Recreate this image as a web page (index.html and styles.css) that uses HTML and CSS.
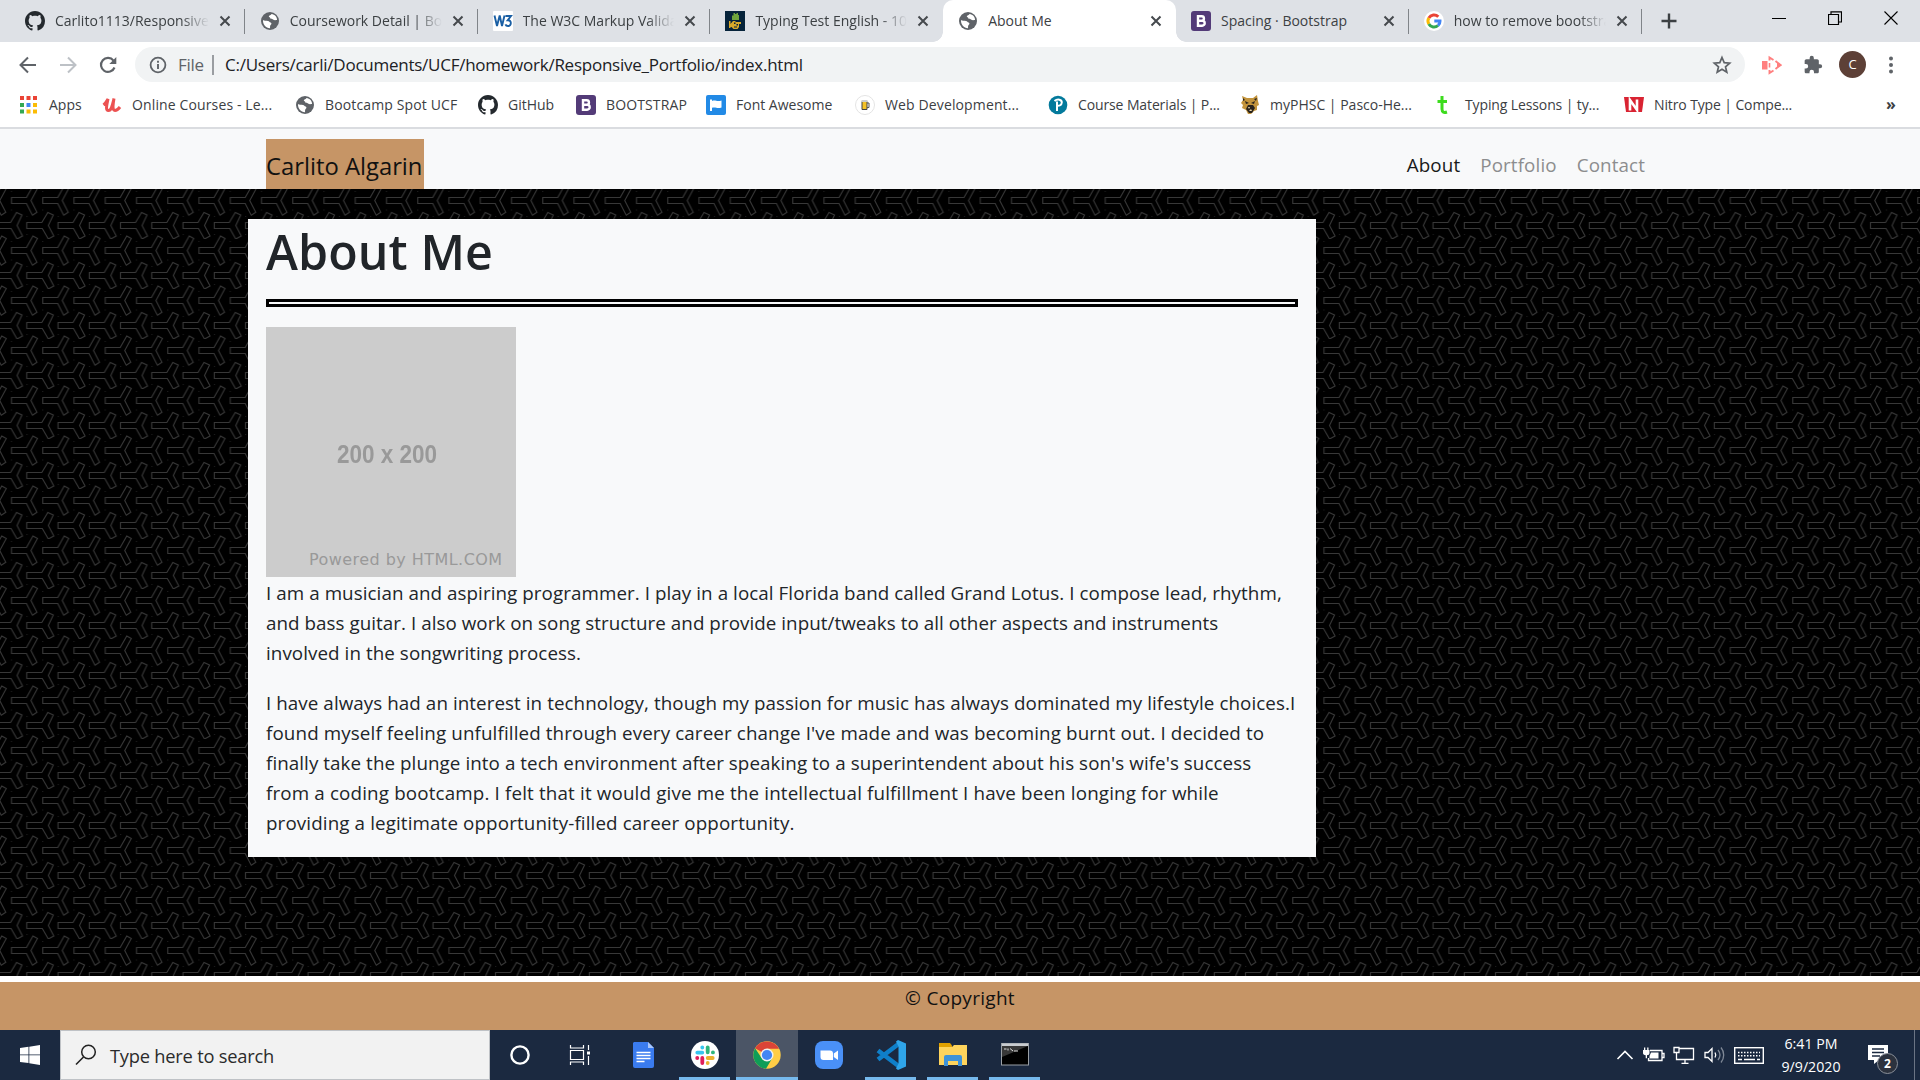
FILE: index.html
```html
<!DOCTYPE html>
<html lang="en">
<head>
<meta charset="utf-8">
<title>About Me</title>
<link rel="stylesheet" href="styles.css">
</head>
<body>
<svg class="defs" aria-hidden="true">
  <symbol id="github" viewBox="0 0 16 16"><path fill="#24292e" d="M8 0C3.58 0 0 3.58 0 8c0 3.54 2.29 6.53 5.47 7.59.4.07.55-.17.55-.38 0-.19-.01-.82-.01-1.49-2.01.37-2.53-.49-2.69-.94-.09-.23-.48-.94-.82-1.13-.28-.15-.68-.52-.01-.53.63-.01 1.08.58 1.23.82.72 1.21 1.87.87 2.33.66.07-.52.28-.87.51-1.07-1.78-.2-3.64-.89-3.64-3.95 0-.87.31-1.59.82-2.15-.08-.2-.36-1.02.08-2.12 0 0 .67-.21 2.2.82.64-.18 1.32-.27 2-.27s1.36.09 2 .27c1.53-1.04 2.2-.82 2.2-.82.44 1.1.16 1.92.08 2.12.51.56.82 1.27.82 2.15 0 3.07-1.87 3.75-3.65 3.95.29.25.54.73.54 1.48 0 1.07-.01 1.93-.01 2.2 0 .21.15.46.55.38A8.01 8.01 0 0 0 16 8c0-4.42-3.58-8-8-8z"/></symbol>
  <symbol id="globe" viewBox="0 0 20 20"><circle cx="10" cy="10" r="9" fill="#5f6368"/><path fill="#fff" d="M3 9c1 .9 3.400.8 5 .9 1.300.2 1.500 1.300 2.600 1.500 1.200.3 1 1.800.2 2.400-1 .8-.6 2-.8 3.400C6 17.300 2.700 13.500 3 9zM11.500 2.900c-.3 1.300-2.600 1.100-2.700 2.400-.1 1 1.400.9 1.500 2 .2 1.300 1.900.4 2.700 1.200 1.100 1 2.400.7 4 .6.300-3.200-2.200-5.700-5.500-6.200z"/></symbol>
  <symbol id="boot" viewBox="0 0 20 20"><rect width="20" height="20" rx="3" fill="#533b78"/><path fill="none" stroke="#fff" stroke-width="2.400" d="M7 5.200h3.700a2.200 2.200 0 0 1 0 4.500H7zM7 9.700h4.200a2.500 2.500 0 0 1 0 5H7z"/></symbol>
  <symbol id="close" viewBox="0 0 12 12"><path d="M1.500 1.500l9 9M10.500 1.500l-9 9" stroke="#45494d" stroke-width="2" fill="none"/></symbol>
</svg>

<header class="browser">
  <div class="tabstrip">
    <div class="tab first"><svg class="fav"><use href="#github"/></svg><span class="tab-title fade">Carlito1113/Responsive_Portfolio</span><svg class="x"><use href="#close"/></svg></div>
    <div class="tab"><svg class="fav"><use href="#globe"/></svg><span class="tab-title fade">Coursework Detail | Bootcamp</span><svg class="x"><use href="#close"/></svg></div>
    <div class="tab"><svg class="fav" viewBox="0 0 20 20"><rect width="20" height="20" rx="1" fill="#fff"/><path d="M1.500 4.500L4 15 6.700 4.500 9 15 11.500 4.500M12.500 5H18l-3.200 4.200c4-.3 4 5.800.2 5.800-1.400 0-2.200-.7-2.600-1.700" stroke="#1a5fa4" stroke-width="1.900" fill="none"/></svg><span class="tab-title fade">The W3C Markup Validation</span><svg class="x"><use href="#close"/></svg></div>
    <div class="tab last"><svg class="fav" viewBox="0 0 20 20"><rect width="20" height="20" fill="#06233a"/><path fill="#6fa53c" d="M7 9V4.500h1.500V2H10v1h1.500V2H13v2h1v5z"/><path fill="#d9a92a" d="M4 10h1.500v3L8 10h2l1 1h5v2h-2v3l-1.500 2h-4L6.500 16H5.500v1H4z"/><path fill="#06233a" d="M9 11.500h1.500v1.500H9zM11.500 13h1.500v1.500h-1.500zM9 15.500h3v1H9z"/></svg><span class="tab-title fade">Typing Test English - 10fast</span><svg class="x"><use href="#close"/></svg></div>
    <div class="tab active"><svg class="fav"><use href="#globe"/></svg><span class="tab-title">About Me</span><svg class="x"><use href="#close"/></svg></div>
    <div class="tab"><svg class="fav"><use href="#boot"/></svg><span class="tab-title">Spacing · Bootstrap</span><svg class="x"><use href="#close"/></svg></div>
    <div class="tab"><svg class="fav" viewBox="0 0 20 20"><circle cx="10" cy="10" r="10" fill="#fff"/><g fill="none" stroke-width="3"><path stroke="#ea4335" d="M4.800 7A6 6 0 0 1 14.300 5.800"/><path stroke="#fbbc05" d="M4.800 13a6 6 0 0 1 0-6"/><path stroke="#34a853" d="M14 14.500A6 6 0 0 1 4.800 13"/><path stroke="#4285f4" d="M10.300 10H16c.1 2-.6 3.400-2 4.500"/></g></svg><span class="tab-title fade">how to remove bootstrap</span><svg class="x"><use href="#close"/></svg></div>
    <svg class="newtab" viewBox="0 0 16 16"><path d="M8 .5v15M.5 8h15" stroke="#3c4043" stroke-width="2.400"/></svg>
    <div class="winctl">
      <svg viewBox="0 0 14 14"><path d="M0 7.500h14" stroke="#000"/></svg>
      <svg viewBox="0 0 14 14"><path d="M.5 3.500h10v10H.5zM3 3.500V.8h10.500v10.200H11" stroke="#000" fill="none" stroke-width="1.200"/></svg>
      <svg viewBox="0 0 14 14"><path d="M.5.5l13 13M13.500.5l-13 13" stroke="#000" stroke-width="1.100"/></svg>
    </div>
  </div>

  <div class="toolbar">
    <div class="navbtns">
      <svg viewBox="0 0 18 18"><path d="M17 9H2M9 1.500L1.500 9 9 16.500" stroke="#5f6368" stroke-width="2" fill="none"/></svg>
      <svg viewBox="0 0 18 18"><path d="M1 9h15M9 1.500L16.500 9 9 16.500" stroke="#bdc1c6" stroke-width="2" fill="none"/></svg>
      <svg viewBox="0 0 18 18"><path d="M15.500 11.500A7 7 0 1 1 14.500 4.600" stroke="#5f6368" stroke-width="2.200" fill="none"/><path d="M17.300 1v7h-7z" fill="#5f6368"/></svg>
    </div>
    <div class="omnibox">
      <svg class="info" viewBox="0 0 18 18"><circle cx="9" cy="9" r="7.400" stroke="#5f6368" stroke-width="1.800" fill="none"/><path d="M9 8v5M9 4.800v1.900" stroke="#5f6368" stroke-width="1.900"/></svg>
      <span class="scheme">File</span>
      <span class="url">C:/Users/carli/Documents/UCF/homework/Responsive_Portfolio/index.html</span>
      <svg class="star" viewBox="0 0 20 20"><path d="M10 2.500l2.200 5.100 5.500.5-4.200 3.700 1.300 5.400L10 14.300l-4.800 2.900 1.300-5.400L2.300 8.100l5.500-.5z" stroke="#5f6368" stroke-width="1.700" fill="none"/></svg>
    </div>
    <div class="actions">
      <svg viewBox="0 0 20 20"><path d="M0 6h5.500v8.500H0z" fill="#ff7f7f"/><path d="M7.500 5.500v-3l4 2.500M13.500 6l5 4-5 4M11.500 15.500l-4 2.500v-3" stroke="#ff7f7f" stroke-width="1.900" fill="none"/><path d="M7.500 8v4.500" stroke="#ff7f7f" stroke-width="1.600"/><path d="M15 7l5 3.200-5 2.800z" fill="#ff7f7f"/></svg>
      <svg viewBox="0 0 24 24"><path fill="#5f6368" d="M20.500 11H19V7c0-1.100-.9-2-2-2h-4V3.500a2.500 2.500 0 0 0-5 0V5H4c-1.100 0-2 .9-2 2v3.800h1.500a2.700 2.700 0 0 1 0 5.400H2V20c0 1.100.9 2 2 2h3.800v-1.500a2.700 2.700 0 0 1 5.400 0V22H17c1.100 0 2-.9 2-2v-4h1.500a2.500 2.500 0 0 0 0-5z"/></svg>
      <span class="avatar">C</span>
      <svg class="dots" viewBox="0 0 20 20"><g fill="#5f6368"><circle cx="10" cy="3.500" r="2"/><circle cx="10" cy="10" r="2"/><circle cx="10" cy="16.500" r="2"/></g></svg>
    </div>
  </div>

  <nav class="bookmarks">
    <a><svg viewBox="0 0 20 20"><path fill="#ea4335" d="M1 1h4v4H1zM7.500 1h4v4h-4zM14 1h4v4h-4z"/><path fill="#34a853" d="M1 8h4v4H1zM1 14.500h4v4H1z"/><path fill="#4285f4" d="M7.500 8h4v4h-4z"/><path fill="#fbbc05" d="M14 8h4v4h-4zM7.500 14.500h4v4h-4zM14 14.500h4v4h-4z"/></svg><span>Apps</span></a>
    <a class="wide"><svg viewBox="0 0 20 20"><path d="M1.500 10C4 8 5 5.500 6 4 5 9 3 15.500 6.500 15.500c3 0 4-6 5.500-12C11 9 10 15.500 13 15.500c2 0 3.500-1.500 5-3.500" stroke="#ec5252" stroke-width="3" fill="none"/></svg><span>Online Courses - Le...</span></a>
    <a class="wide"><svg><use href="#globe"/></svg><span>Bootcamp Spot UCF</span></a>
    <a><svg><use href="#github"/></svg><span>GitHub</span></a>
    <a class="wide"><svg><use href="#boot"/></svg><span>BOOTSTRAP</span></a>
    <a><svg viewBox="0 0 20 20"><rect width="20" height="20" rx="2" fill="#228ae6"/><path fill="#fff" d="M4 4.500h2V6c3-1.500 5 1 9.500-.5v7c-4.500 1.500-6-1-9.500.3V16H4z"/></svg><span>Font Awesome</span></a>
    <a class="wide"><svg viewBox="0 0 20 20"><circle cx="10" cy="10" r="9.500" fill="#fff" stroke="#e4e4e4"/><path d="M7 6.500h5v8H7z" fill="#f5c226" stroke="#444"/><path d="M6.500 5h6v2h-6z" fill="#ccc"/><path d="M12 8h2v4.500h-2" stroke="#555" fill="none"/></svg><span>Web Development...</span></a>
    <a class="tight"><svg viewBox="0 0 20 20"><circle cx="10" cy="10" r="9.300" fill="#047a9c"/><path d="M9 16V6.500M6.500 6c3-2.500 7.500-1.500 7.300 1.500-.2 2.500-2.300 3.400-4.800 3.200" stroke="#fff" stroke-width="2" fill="none"/></svg><span>Course Materials | P...</span></a>
    <a><svg viewBox="0 0 20 20"><path fill="#c3943c" d="M2 1l5 2h6l4-3 1 6 1 4-2 1v4l-3 1-3 3H8l-2-4-4-2 1-3-2-2 2-3z"/><path fill="#29231c" d="M5 6l4 2-3 1zM15 6l-4 2 3 1zM8 10h5l2 3-3 5H9l-3-4zM3 3l2 2-2 1zM17 3l-1 3-2-2z"/><path fill="#e9d6ac" d="M8 12l1 2 1-2M12 16l-1-2-2 2z"/></svg><span>myPHSC | Pasco-He...</span></a>
    <a class="tight"><svg viewBox="0 0 20 20"><path d="M7 1v13c0 3.500 2 4 5 3M2.500 6.500h9.500" stroke="#3ddc1e" stroke-width="3" fill="none"/></svg><span>Typing Lessons | ty...</span></a>
    <a class="tight"><svg viewBox="0 0 20 20"><path fill="#d92332" d="M0 2h20l-2 15H2z"/><path d="M6 15.500V5l7 10V4.500" stroke="#fff" stroke-width="2.600" fill="none"/></svg><span>Nitro Type | Compe...</span></a>
    <b class="more">»</b>
  </nav>
</header>

<main class="page">
  <nav class="navbar">
    <a class="brand">Carlito Algarin</a>
    <div class="links"><a class="on">About</a><a>Portfolio</a><a>Contact</a></div>
  </nav>
  <section class="stage">
    <article class="card">
      <h1>About Me</h1>
      <div class="rule"></div>
      <div class="placeholder"><span class="dims">200 x 200</span><span class="powered">Powered by HTML.COM</span></div>
      <p>I am a musician and aspiring programmer. I play in a local Florida band called Grand Lotus. I compose lead, rhythm,<br>
      <span class="snug">and bass guitar. I also work on song structure and provide input/tweaks to all other aspects and instruments</span><br>
      involved in the songwriting process.</p>
      <p>I have always had an interest in technology, though my passion for music has always dominated my lifestyle choices.I<br>
      <span class="loose">found myself feeling unfulfilled through every career change I've made and was becoming burnt out. I decided to</span><br>
      finally take the plunge into a tech environment after speaking to a superintendent about his son's wife's success<br>
      <span class="looser">from a coding bootcamp. I felt that it would give me the intellectual fulfillment I have been longing for while</span><br>
      <span class="loose">providing a legitimate opportunity-filled career opportunity.</span></p>
    </article>
  </section>
  <footer class="footer">© Copyright</footer>
</main>

<div class="taskbar">
  <div class="start"><svg viewBox="0 0 20 20"><path fill="#fff" d="M0 3l8.500-1.200v7.700H0zM9.300 1.700L20 0v9.500H9.300zM0 10.300h8.500V18L0 16.900zM9.300 10.300H20V20L9.300 18.200z"/></svg></div>
  <div class="search"><svg viewBox="0 0 22 22"><circle cx="13.500" cy="8" r="6.800" stroke="#222" stroke-width="1.500" fill="none"/><path d="M8.500 13L1 20.500" stroke="#222" stroke-width="1.600"/></svg><span>Type here to search</span></div>
  <div class="task cortana"><svg viewBox="0 0 22 22"><circle cx="11" cy="11" r="8.600" stroke="#fff" stroke-width="2.400" fill="none"/></svg></div>
  <div class="task view"><svg viewBox="0 0 22 22"><path d="M1.500 6.500h13v9h-13zM1.500 1v3h13V1M1.500 21v-3h13v3M19.500 1v5M19.500 12v9" stroke="#fff" stroke-width="1.200" fill="none"/><path d="M18 7.500h3v3h-3z" fill="#fff"/></svg></div>
  <div class="task"><svg class="big" viewBox="0 0 28 28"><path fill="#3a7bef" d="M5 1h14l6 6v18a2 2 0 0 1-2 2H6a2 2 0 0 1-2-2V2z"/><path fill="#a9c6fa" d="M19 1l6 6h-6z"/><path d="M7.500 11.500h14M7.500 14.500h14M7.500 17.500h14M7.500 20.500h8" stroke="#fff" stroke-width="1.400"/></svg></div>
  <div class="task open"><svg class="big" viewBox="0 0 28 28"><circle cx="14" cy="14" r="14" fill="#fff"/><g fill="none" stroke-width="3.800" stroke-linecap="round"><path stroke="#36c5f0" d="M6.300 11.600h5M11.300 6.300v.3"/><path stroke="#2eb67d" d="M16.700 6.300v5M21.900 11.400h.1"/><path stroke="#ecb22e" d="M16.700 17h5M16.700 22v.1"/><path stroke="#e01e5a" d="M11.300 17v5M6.200 17h.1"/></g></svg></div>
  <div class="task open current"><svg class="big" viewBox="0 0 28 28"><circle cx="14" cy="14" r="13.700" fill="#ffcd46"/><path fill="#db4437" d="M14 14L2.100 7.200A13.700 13.700 0 0 1 26 7.800H14z"/><path fill="#0f9d58" d="M2.100 7.200A13.700 13.700 0 0 0 13 27.700L19.200 17.300 14 14 8.600 17z"/><circle cx="14" cy="14" r="6.500" fill="#f1f1f1"/><circle cx="14" cy="14" r="5.100" fill="#4285f4"/></svg></div>
  <div class="task"><svg class="big" viewBox="0 0 28 28"><rect width="28" height="28" rx="8" fill="#4a90f7"/><path fill="#fff" d="M5.500 9.500h9.500a3 3 0 0 1 3 3v6.500H8.500a3 3 0 0 1-3-3zM18.800 12.500L23 9.500v9.500l-4.200-3z"/></svg></div>
  <div class="task open"><svg class="vs" viewBox="0 0 30 30"><path d="M2 10.500L22.500 26M2 19.500L22.500 4" stroke="#0f7fc9" stroke-width="4.600" fill="none"/><path fill="#2fa5ea" d="M22 0l8 3.500v23L22 30l-2-1.500 2.500-5V6.500L20 1.500z"/></svg></div>
  <div class="task open"><svg class="big" viewBox="0 0 28 28"><path fill="#e1a100" d="M0 2h11l2 2.500V8H0z"/><path fill="#ffd45c" d="M0 6h13l2-2h13v20H0z"/><path fill="#3f93d8" d="M5 25V16a2 2 0 0 1 2-2h14a2 2 0 0 1 2 2v9h-4v-5H9v5z"/></svg></div>
  <div class="task open"><svg class="big" viewBox="0 0 28 28"><rect x=".5" y="2.500" width="27" height="21.500" fill="#000" stroke="#9aa0a6"/><path fill="#c9ccd0" d="M1 2.500h26V5H1z"/><path fill="#383838" d="M1 5h26L1 16z"/><path d="M3 8h2.500M7 7.500v2M9 7.500l3 2.500M13 10h4" stroke="#ddd"/></svg></div>
  <div class="tray">
    <svg class="chev" viewBox="0 0 18 20"><path d="M1.500 14L9 6.500l7.500 7.500" stroke="#fff" stroke-width="1.600" fill="none"/></svg>
    <svg viewBox="0 0 22 20"><path d="M7 5.500h12v10H5.500V13M19.500 8.500h1.500v4h-1.500" stroke="#fff" stroke-width="1.300" fill="none"/><path fill="#fff" d="M8 7.500h7.500v6H6.500V11zM0 5h6.500v3c0 1.500-1 2.200-2.500 2.200v3H2.700v-3C1 10 0 9.500 0 8zM1 2.500h1.300V5H1zM4.200 2.500h1.300V5H4.200z"/></svg>
    <svg viewBox="0 0 22 20"><path d="M6 3.500h14.500v11H3.500V9M12 14.500V18M8.500 18.300h7M1 2.500h5v5H1zM3.500 7v4" stroke="#fff" stroke-width="1.300" fill="none"/></svg>
    <svg viewBox="0 0 22 20"><path d="M1 7.500h3l4-4v13l-4-4H1z" stroke="#fff" stroke-width="1.300" fill="none"/><path d="M11 7.500c1 1.600 1 3.400 0 5" stroke="#fff" stroke-width="1.300" fill="none"/><path d="M14 5c2.400 3 2.400 7 0 10M17 2.500c3.600 4.500 3.600 10.500 0 15" stroke="#7f8896" stroke-width="1.300" fill="none"/></svg>
    <svg class="kbd" viewBox="0 0 30 20"><rect x=".7" y="2.700" width="28.600" height="15.600" stroke="#fff" stroke-width="1.400" fill="none"/><path d="M4 7.500h22M4 10.800h22" stroke="#fff" stroke-width="1.500" stroke-dasharray="1.500 1.500"/><path d="M4 14.500h4M10 14.500h11M23 14.500h3" stroke="#fff" stroke-width="1.400"/></svg>
    <div class="clock">6:41 PM<br>9/9/2020</div>
    <div class="notif"><svg viewBox="0 0 20 22"><path fill="#fff" d="M0 1h20v15h-9l-5 4v-4H0z"/><path d="M4 5h12M4 8.500h12M4 12h8" stroke="#1b2940" stroke-width="1.300"/></svg><b>2</b></div>
    <i class="peek"></i>
  </div>
</div>
</body>
</html>
```
FILE: styles.css
```css
* { box-sizing: border-box; }
body { margin: 0; width: 1920px; height: 1080px; overflow: hidden; display: flex; flex-direction: column; font-family: "Open Sans", "Noto Sans", sans-serif; background: #fff; color: #212529; }
svg { display: block; flex: none; }
.defs { width: 0; height: 0; position: absolute; }

.browser { height: 129px; background: #fff; border-bottom: 2px solid #dadce0; color: #3c4043; font-size: 14px; }
.tabstrip { height: 42px; background: #dee1e6; display: flex; padding-left: 12px; }
.tab { width: 232.800px; height: 42px; display: flex; align-items: center; padding: 0 14px 0 15px; position: relative; }
.tab.first { padding-left: 13px; }
.tab:not(.active):not(.last)::after { content: ""; position: absolute; right: 0; top: 9px; width: 1px; height: 25px; background: #808489; }
.tab.active { background: #fff; border-radius: 10px 10px 0 0; }
.tab.active::before, .tab.active::after { content: ""; position: absolute; bottom: 0; width: 10px; height: 10px; }
.tab.active::before { left: -10px; background: radial-gradient(circle at 0 0, transparent 9.500px, #fff 10px); }
.tab.active::after { right: -10px; background: radial-gradient(circle at 100% 0, transparent 9.500px, #fff 10px); }
.fav { width: 20px; height: 20px; }
.tab-title { flex: 1; margin-left: 10px; margin-right: 10px; padding-bottom: 2px; overflow: hidden; white-space: nowrap; }
.fade { -webkit-mask-image: linear-gradient(90deg, #000 82%, transparent); mask-image: linear-gradient(90deg, #000 82%, transparent); }
.x { width: 12px; height: 12px; }
.newtab { width: 16px; height: 16px; margin: 13px 0 0 19px; }
.winctl { display: flex; gap: 42px; margin: 11px 22px 0 auto; }
.winctl svg { width: 14px; height: 14px; }

.toolbar { height: 45px; display: flex; align-items: center; }
.navbtns { width: 135px; display: flex; gap: 22px; padding-left: 19px; }
.navbtns svg { width: 18px; height: 18px; }
.omnibox { width: 1610px; height: 35px; border-radius: 18px; background: #f1f3f4; display: flex; align-items: center; padding: 0 13px 0 14px; font-size: 17px; letter-spacing: -.25px; }
.info { width: 18px; height: 18px; }
.scheme { margin-left: 11px; color: #5f6368; border-right: 2px solid #9a9da1; height: 20px; line-height: 19px; width: 36px; }
.url { margin-left: 11px; color: #202124; white-space: nowrap; }
.star { width: 20px; height: 20px; margin-left: auto; }
.actions { display: flex; align-items: center; flex: 1; padding-left: 17px; }
.actions svg { width: 20px; height: 20px; }
.actions svg + svg { margin-left: 21px; }
.avatar { width: 27px; height: 27px; border-radius: 50%; background: #5d4037; color: #fff; font-size: 13px; line-height: 27px; text-align: center; margin-left: 16px; }
.actions .dots { margin-left: 15px; }

.bookmarks { height: 36px; display: grid; grid-template-columns: 83px 193px 183px 98px 130px 149px 193px 192px 195px 189px 262px 30px; padding: 0 0 1px 19px; align-items: center; white-space: nowrap; }
.bookmarks a { display: flex; align-items: center; gap: 10px; }
.bookmarks a span { padding-bottom: 1px; }
.bookmarks svg { width: 20px; height: 20px; }
.wide { letter-spacing: .13px; }
.tight { letter-spacing: -.12px; }
.more { font-size: 16px; line-height: 20px; padding-bottom: 2px; }

.page { height: 901px; display: flex; flex-direction: column; }
.navbar { height: 60px; background: #f8f9fa; padding: 10px 275px 0 266px; display: flex; justify-content: space-between; }
.brand { background: #c69566; width: 158px; height: 50px; font-size: 23.800px; line-height: 54px; color: #111; white-space: nowrap; }
.links { display: flex; gap: 20px; font-size: 18.800px; letter-spacing: .12px; line-height: 52px; color: #8c8d8e; }
.links .on { color: #191919; }
.stage { height: 787px; padding: 30px 0 0 248px; background: #000 url("data:image/svg+xml,%3Csvg xmlns='http://www.w3.org/2000/svg' width='125' height='50'%3E%3Cdefs%3E%3Cpattern id='t' width='31.25' height='50' patternUnits='userSpaceOnUse'%3E%3Cg fill='none' stroke='%23383838' stroke-width='1.1'%3E%3Cpath d='M11.500 8.500h15l6.500-11.500 4.500 2.500-6.500 12 6 11.800-4.500 3-6-11.800h-15z'/%3E%3Cpath d='M11.500 58.500h15l6.500-11.500 4.500 2.500-6.500 12h-20z'/%3E%3Cpath d='M-19.750 8.500h15l6.500-11.500 4.500 2.500-6.500 12 6 11.800-4.500 3-6-11.800h-15z'/%3E%3Cpath d='M-19.750 58.500h15l6.500-11.500 4.500 2.500-6.500 12h-20z'/%3E%3Cpath d='M26.800 33.500h15l6-10 5.500 2.500-5 10.500 5.500 10.500-5.500 3-6-10.500h-15.500z'/%3E%3Cpath d='M-4.450 33.500h15l6-10 5.500 2.500-5 10.500 5.500 10.500-5.500 3-6-10.500h-15.500z'/%3E%3C/g%3E%3Cpath fill='%23222' d='M11 2h1v1h-1zM11 20.500h1v1h-1zM26.500 27h1v1h-1zM26.500 45h1v1h-1z'/%3E%3C/pattern%3E%3C/defs%3E%3Crect width='125' height='50' fill='url(%23t)'/%3E%3C/svg%3E"); }
.card { width: 1068px; height: 638px; background: #f8f9fa; padding: 0 18px; }
h1 { margin: 0; height: 80px; font-size: 48.300px; letter-spacing: .1px; line-height: 64px; font-weight: 600; white-space: nowrap; }
.rule { height: 8px; border: 3px solid #000; background: #f8f9fa; }
.placeholder { width: 250px; height: 250px; margin: 20px 0 1px; background: #ccc; display: flex; flex-direction: column; color: #999; white-space: nowrap; }
.dims { font: bold 25px/30px "Liberation Sans", sans-serif; margin: 112px 0 0 71px; transform: scaleX(.9); transform-origin: 0 0; }
.powered { font: 16px/20px "DejaVu Sans", sans-serif; letter-spacing: .45px; margin: 81px 0 0 43px; }
p { margin: 0 0 20px; font-size: 18.800px; letter-spacing: .07px; line-height: 30px; white-space: nowrap; }
.snug { letter-spacing: .05px; }
.loose { letter-spacing: .12px; }
.looser { letter-spacing: .155px; }
.footer { height: 54px; border-top: 6px solid #fff; background: #c69566; text-align: center; font-size: 19px; letter-spacing: .3px; line-height: 32px; color: #111; }

.taskbar { height: 50px; background: #1b2940; display: flex; color: #fff; }
.start { width: 60px; padding: 15px 0 0 20px; }
.start svg { width: 20px; height: 20px; }
.search { width: 430px; background: #f2f2f2; border: 1px solid #bfc2c6; display: flex; align-items: center; padding-left: 14px; gap: 13px; color: #2b2b2b; font-size: 18.300px; letter-spacing: -.22px; }
.search svg { width: 22px; height: 22px; }
.task { width: 62px; display: grid; place-items: center; position: relative; }
.task.cortana { width: 60px; }
.task.view { padding-right: 2px; }
.task svg { width: 22px; height: 22px; }
.task .big { width: 28px; height: 28px; }
.task .vs { width: 30px; height: 30px; }
.open::after { content: ""; position: absolute; left: 5px; right: 6px; bottom: 0; height: 3px; background: #76b9ed; }
.current { background: #4b5566; }
.current::after { left: 0; right: 0; }
.tray { margin-left: auto; width: 304px; display: flex; align-items: center; gap: 8px; }
.tray svg { width: 22px; height: 20px; }
.tray .chev { width: 18px; }
.tray svg + svg { margin-left: .5px; }
.tray .kbd { width: 30px; }
.clock { width: 80px; margin-left: -1px; text-align: center; font-size: 14.200px; line-height: 23px; }
.notif { position: relative; margin-left: 9px; }
.notif svg { width: 20px; height: 22px; }
.notif b { position: absolute; left: 9px; top: 9px; width: 21px; height: 21px; border-radius: 50%; background: #2c323e; border: 1px solid #8b9099; font-size: 12px; line-height: 19px; text-align: center; }
.peek { width: 1px; height: 50px; background: #6b7484; margin: 0 5px 0 auto; }
```
